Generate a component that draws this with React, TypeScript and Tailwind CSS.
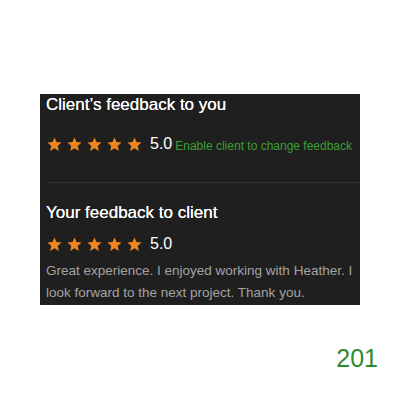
const Star = () => (
  <svg viewBox="0 0 24 24" className="w-[17px] h-[17px] fill-[#f0851e]">
    <path d="M12 17.27L18.18 21l-1.64-7.03L22 9.24l-7.19-.61L12 2 9.19 8.63 2 9.24l5.46 4.73L5.82 21z" />
  </svg>
);

const Stars = () => (
  <div className="flex items-center gap-[3px]">
    {Array.from({ length: 5 }).map((_, i) => (
      <Star key={i} />
    ))}
  </div>
);

export default function App() {
  return (
    <div
      className="w-[400px] h-[400px] bg-white pt-[94px] pl-[40px]"
      style={{ fontFamily: "'Liberation Sans', Arial, sans-serif" }}
    >
      <div className="w-[320px] h-[211px] bg-[#1f1f1f] flex flex-col">
        <div className="pl-[6px] pr-[2px]">
          <h3 className="text-white text-[17px] leading-[20px] pt-[1px] [text-shadow:0_0_0.4px_#fff]">
            Client&rsquo;s feedback to you
          </h3>
          <div className="flex items-end mt-[20px] whitespace-nowrap">
            <Stars />
            <span className="text-white text-[16px] leading-[18px] ml-[7px]">5.0</span>
            <span className="text-[#3c9f36] text-[12px] leading-[14px] ml-[3px]">
              Enable client to change feedback
            </span>
          </div>
        </div>
        <div className="ml-[7px] mt-[29px] h-px bg-[#333333]" />
        <div className="pl-[6px] pr-[2px] pt-[20px]">
          <h3 className="text-white text-[17px] leading-[20px] [text-shadow:0_0_0.4px_#fff]">
            Your feedback to client
          </h3>
          <div className="flex items-end mt-[12px]">
            <Stars />
            <span className="text-white text-[16px] leading-[18px] ml-[7px]">5.0</span>
          </div>
          <p className="text-[#a3a3a3] text-[13.5px] leading-[22px] mt-[7px]">
            Great experience. I enjoyed working with Heather. I look forward to the next project. Thank you.
          </p>
        </div>
      </div>
      <div className="flex justify-end pr-[22px] mt-[38px]">
        <span className="text-[#2e8b2e] text-[25px] leading-[30px]">201</span>
      </div>
    </div>
  );
}
